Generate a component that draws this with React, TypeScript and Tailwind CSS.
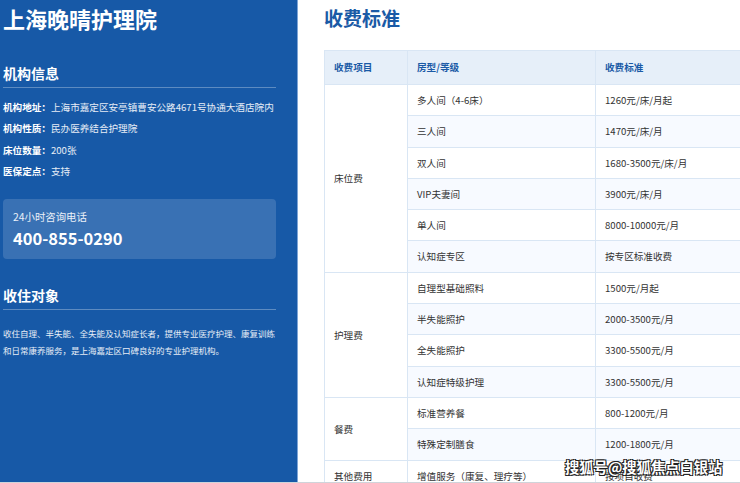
import React from "react";

const font = { fontFamily: '"Noto Sans CJK SC", "Noto Sans", sans-serif' };

type Row = { cat?: string; span?: number; room: string; price: string };

const rows: Row[] = [
  { cat: "床位费", span: 6, room: "多人间（4-6床）", price: "1260元/床/月起" },
  { room: "三人间", price: "1470元/床/月" },
  { room: "双人间", price: "1680-3500元/床/月" },
  { room: "VIP夫妻间", price: "3900元/床/月" },
  { room: "单人间", price: "8000-10000元/月" },
  { room: "认知症专区", price: "按专区标准收费" },
  { cat: "护理费", span: 4, room: "自理型基础照料", price: "1500元/月起" },
  { room: "半失能照护", price: "2000-3500元/月" },
  { room: "全失能照护", price: "3300-5500元/月" },
  { room: "认知症特级护理", price: "3300-5500元/月" },
  { cat: "餐费", span: 2, room: "标准营养餐", price: "800-1200元/月" },
  { room: "特殊定制膳食", price: "1200-1800元/月" },
  { cat: "其他费用", span: 1, room: "增值服务（康复、理疗等）", price: "按项目收费" },
];

export default function App() {
  return (
    <div
      className="relative w-[740px] h-[483px] overflow-hidden bg-white flex border-b border-[#cfd4da]"
      style={font}
    >
      <aside className="w-[298px] shrink-0 h-full bg-[#1759a7] border-r border-[#7fa5d6] pl-[3px] pr-[21px] text-white">
        <h1 className="text-[22px] leading-[30px] font-bold mt-[3px]">上海晚晴护理院</h1>

        <h2 className="mt-[30px] text-[14px] leading-[20px] font-bold pb-[4px] border-b border-white/30">
          机构信息
        </h2>
        <div className="mt-[9px] text-[9.6px] leading-[21.4px] whitespace-nowrap">
          <div><span className="font-bold">机构地址：</span><span className="text-white/90">上海市嘉定区安亭镇曹安公路4671号协通大酒店院内</span></div>
          <div><span className="font-bold">机构性质：</span><span className="text-white/90">民办医养结合护理院</span></div>
          <div><span className="font-bold">床位数量：</span><span className="text-white/90">200张</span></div>
          <div><span className="font-bold">医保定点：</span><span className="text-white/90">支持</span></div>
        </div>

        <div className="mt-[16px] h-[60px] rounded-[4px] bg-white/15 pl-[10px] pt-[10px]">
          <div className="text-[10.4px] leading-[16px] text-white/90">24小时咨询电话</div>
          <div className="text-[16.5px] leading-[24px] font-bold mt-[1px]">400-855-0290</div>
        </div>

        <h2 className="mt-[26px] text-[14px] leading-[20px] font-bold pb-[4px] border-b border-white/30">
          收住对象
        </h2>
        <p className="mt-[15px] text-[8.5px] leading-[17px] text-white/90">
          收住自理、半失能、全失能及认知症长者，提供专业医疗护理、康复训练和日常康养服务，是上海嘉定区口碑良好的专业护理机构。
        </p>
      </aside>

      <main className="flex-1 pl-[26px] overflow-hidden">
        <h2 className="text-[19px] leading-[26px] font-bold text-[#1a5aa6] mt-[5px]">收费标准</h2>
        <table className="mt-[19px] w-[520px] border-collapse text-[9.6px] text-[#333]" style={{ tableLayout: "fixed" }}>
          <colgroup>
            <col style={{ width: 83 }} />
            <col style={{ width: 188 }} />
            <col />
          </colgroup>
          <thead>
            <tr className="bg-[#e6eff9] h-[34px]">
              <th className="border border-[#d9e6f4] text-left pl-[9px] font-bold text-[#1a5aa6]">收费项目</th>
              <th className="border border-[#d9e6f4] text-left pl-[9px] font-bold text-[#1a5aa6]">房型/等级</th>
              <th className="border border-[#d9e6f4] text-left pl-[9px] font-bold text-[#1a5aa6]">收费标准</th>
            </tr>
          </thead>
          <tbody>
            {rows.map((r, i) => (
              <tr key={i} className={`h-[31.3px] ${i % 2 === 1 ? "bg-[#f7faff]" : "bg-white"}`}>
                {r.cat && (
                  <td rowSpan={r.span} className="border border-[#d9e6f4] pl-[9px] bg-white">
                    {r.cat}
                  </td>
                )}
                <td className="border border-[#d9e6f4] pl-[9px]">{r.room}</td>
                <td className="border border-[#d9e6f4] pl-[9px]">{r.price}</td>
              </tr>
            ))}
          </tbody>
        </table>
      </main>

      <div
        className="absolute left-[565px] top-[457px] text-[14.3px] leading-[20px] text-white font-bold whitespace-nowrap"
        style={{ textShadow: "1px 1px 0 #222, -1px -1px 0 #222, 1px -1px 0 #222, -1px 1px 0 #222" }}
      >
        搜狐号@搜狐焦点白银站
      </div>
    </div>
  );
}
